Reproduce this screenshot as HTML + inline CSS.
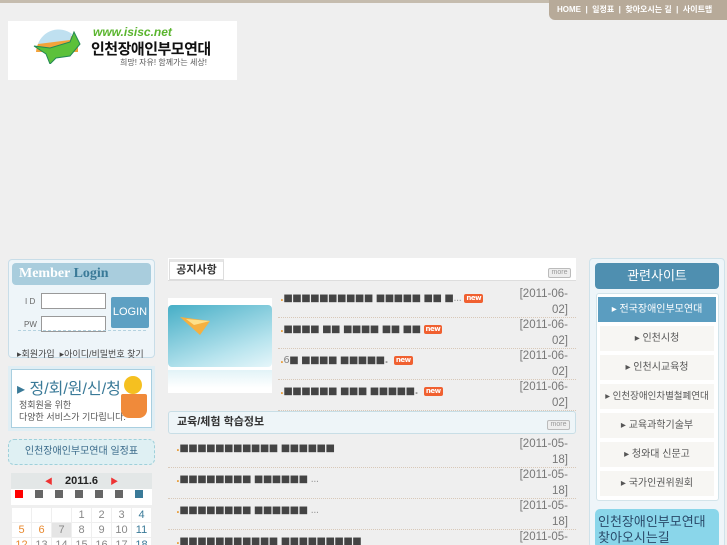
<!DOCTYPE html>
<html><head><meta charset="utf-8"><style>
*{margin:0;padding:0;box-sizing:border-box}
html,body{width:727px;height:545px;overflow:hidden}
body{background:#efefef;font-family:"Liberation Sans","Noto Sans CJK KR",sans-serif;position:relative;font-size:11px;color:#555}
.a{position:absolute}
.sq{font-family:"DejaVu Sans",sans-serif;color:#444;font-weight:bold;letter-spacing:-0.5px;font-size:10px;white-space:nowrap}
.date{color:#777;font-size:11.5px;text-align:right;line-height:15.5px;width:52px}
.dot{border-bottom:1px dotted #d8c8b8}
.new{display:inline-block;background:#f06030;color:#fff;font-size:7px;padding:0 2px;border-radius:2px;line-height:9px;vertical-align:middle}
.more{border:1px solid #bbb;background:#eee;color:#999;font-size:7px;width:23px;height:10px;text-align:center;line-height:8px;border-radius:2px}
.cal td{width:19px;height:14px;text-align:center;font-size:11px;color:#888;background:#fff;padding:0}
.rs{left:600px;width:114px;height:25px;text-align:center;line-height:25px;font-size:10px;color:#555;background:#f7f6f3}
</style></head><body>
<div class="a" style="left:0;top:0;width:727px;height:3px;background:#c5bcae"></div>
<div class="a" style="left:549px;top:0;width:178px;height:20px;background:#b7aa99;border-radius:0 0 0 6px;color:#fff;font-size:8px;line-height:20px;padding-left:8px;white-space:nowrap;font-weight:bold">HOME &nbsp;|&nbsp; 일정표 &nbsp;|&nbsp; 찾아오시는 길 &nbsp;|&nbsp; 사이트맵</div>
<div class="a" style="left:8px;top:21px;width:229px;height:59px;background:#fff"></div>
<svg class="a" style="left:30px;top:24px" width="55" height="40"><path d="M6 28 A22 22 0 0 1 48 20 L48 28Z" fill="#f3a33a"/><path d="M8 20 A22 22 0 0 1 42 10 L40 16 Z" fill="#bfe0f0"/><path d="M4 22 L20 24 L40 18 L44 8 L50 20 L40 32 L26 34 L20 40 L16 30Z" fill="#5cc13a" stroke="#285" stroke-width="1"/></svg>
<div class="a" style="left:93px;top:25px;color:#5ab52e;font-style:italic;font-weight:bold;font-size:12px">www.isisc.net</div>
<div class="a" style="left:91px;top:38px;color:#111;font-weight:bold;font-size:15px;letter-spacing:-0.5px">인천장애인부모연대</div>
<div class="a" style="left:120px;top:57px;color:#555;font-size:8px">희망! 자유! 함께가는 세상!</div>

<div class="a" style="left:8px;top:259px;width:147px;height:99px;background:#eef5f9;border:1px solid #c8dde8;border-radius:4px"></div>
<div class="a" style="left:12px;top:263px;width:139px;height:22px;background:#a9cddd;border-radius:4px;font-family:'Liberation Serif',serif;font-weight:bold;font-size:14px;line-height:22px;padding-left:7px;color:#fff">Member <span style="color:#3a7a98">Login</span></div>
<div class="a" style="left:25px;top:297px;font-size:8px;color:#666">I D</div>
<div class="a" style="left:24px;top:320px;font-size:8px;color:#666">PW</div>
<div class="a" style="left:41px;top:293px;width:65px;height:16px;background:#fff;border:1px solid #999"></div>
<div class="a" style="left:41px;top:316px;width:65px;height:16px;background:#fff;border:1px solid #999"></div>
<div class="a" style="left:111px;top:297px;width:38px;height:31px;background:#5da0c3;border-radius:2px;color:#fff;font-size:11px;text-align:center;line-height:31px">LOGIN</div>
<div class="a" style="left:18px;top:330px;width:128px;border-top:1px dashed #b5d3e0"></div>
<div class="a" style="left:17px;top:347px;font-size:9px;color:#444;white-space:nowrap">▸회원가입 &nbsp;▸아이디/비밀번호 찾기</div>

<div class="a" style="left:8px;top:366px;width:147px;height:65px;background:#fff;border:3px solid #e0eef4;outline:1px solid #a9cfe0;outline-offset:-4px"></div>
<div class="a" style="left:17px;top:375px;color:#3a7a98;font-size:16px;white-space:nowrap">▸ 정/회/원/신/청</div>
<div class="a" style="left:19px;top:399px;color:#555;font-size:9px;line-height:12px">정회원을 위한<br>다양한 서비스가 기다립니다.</div>
<div class="a" style="left:124px;top:376px;width:18px;height:18px;border-radius:50%;background:#f5c020"></div>
<div class="a" style="left:121px;top:394px;width:26px;height:24px;background:#f08a3a;border-radius:2px 2px 8px 8px"></div>

<div class="a" style="left:8px;top:439px;width:147px;height:26px;background:#dff0f3;border:1px dashed #9fd0da;border-radius:6px;color:#3a6a8a;font-size:10px;text-align:center;line-height:24px">인천장애인부모연대 일정표</div>

<div class="a" style="left:11px;top:473px;width:141px;height:16px;background:#e3e7e7;text-align:center;font-weight:bold;font-size:11px;color:#222;line-height:16px"><span style="color:#e33;font-size:8px">◀</span>&nbsp;&nbsp;&nbsp; 2011.6 &nbsp;&nbsp;&nbsp;<span style="color:#e33;font-size:8px">▶</span></div>
<div class="a" style="left:11px;top:489px;width:141px;height:16px;background:#fff"></div>
<div class="a" style="left:15px;top:490px;width:8px;height:8px;background:#f00"></div>
<div class="a" style="left:35px;top:490px;width:8px;height:8px;background:#666;box-shadow:20px 0 #666,40px 0 #666,60px 0 #666,80px 0 #666"></div>
<div class="a" style="left:135px;top:490px;width:8px;height:8px;background:#3a7a98"></div>
<table class="a cal" style="left:11px;top:507px;border-collapse:separate;border-spacing:1px;background:#efefef">
<tr><td></td><td></td><td></td><td>1</td><td>2</td><td>3</td><td style="color:#3a7a98">4</td></tr>
<tr><td style="color:#e88a30">5</td><td style="color:#e88a30">6</td><td style="background:#e5e5e5">7</td><td>8</td><td>9</td><td>10</td><td style="color:#3a7a98">11</td></tr>
<tr><td style="color:#e88a30">12</td><td>13</td><td>14</td><td>15</td><td>16</td><td>17</td><td style="color:#3a7a98">18</td></tr>
</table>

<div class="a" style="left:168px;top:258px;width:408px;height:23px;background:#fff;border-bottom:1px solid #ddd"></div>
<div class="a" style="left:169px;top:259px;width:55px;height:21px;border:1px solid #ddd;border-top:3px solid #e5e5e5;background:#fff;font-size:11px;color:#333;font-weight:bold;text-align:center;line-height:17px">공지사항</div>
<div class="a more" style="left:548px;top:268px">more</div>
<div class="a" style="left:168px;top:298px;width:104px;height:95px;background:#fff"></div>
<div class="a" style="left:168px;top:305px;width:104px;height:62px;background:linear-gradient(160deg,#46aec6,#b8e4ee 70%,#e6f6fa);border-radius:4px"></div>
<svg class="a" style="left:180px;top:315px" width="40" height="25"><path d="M0 2 L30 6 L20 20Z" fill="#f5b040"/><path d="M6 4 L30 6 L14 10Z" fill="#fde08a"/></svg>
<div class="a" style="left:168px;top:370px;width:104px;height:18px;background:linear-gradient(#e2f3f7,#fff)"></div>

<div class="a dot" style="left:278px;top:287px;width:298px;height:31px"><span class="sq" style="position:absolute;left:2px;top:6px"><span style="color:#e8a040">.</span>■■■■■■■■■■ ■■■■■ ■■ ■<span style="color:#999;font-weight:normal">...</span> <span class="new">new</span></span><div class="date" style="position:absolute;right:8px;top:0">[2011-06-02]</div></div>
<div class="a dot" style="left:278px;top:318px;width:298px;height:31px"><span class="sq" style="position:absolute;left:2px;top:6px"><span style="color:#e8a040">.</span>■■■■ ■■ ■■■■ ■■ ■■ <span class="new">new</span></span><div class="date" style="position:absolute;right:8px;top:0">[2011-06-02]</div></div>
<div class="a dot" style="left:278px;top:349px;width:298px;height:31px"><span class="sq" style="position:absolute;left:2px;top:6px"><span style="color:#e8a040">.</span><span style="color:#888;font-weight:normal">6</span>■ ■■■■ ■■■■■<span style="color:#999">.</span> &nbsp;<span class="new">new</span></span><div class="date" style="position:absolute;right:8px;top:0">[2011-06-02]</div></div>
<div class="a dot" style="left:278px;top:380px;width:298px;height:31px"><span class="sq" style="position:absolute;left:2px;top:6px"><span style="color:#e8a040">.</span>■■■■■■ ■■■ ■■■■■<span style="color:#999">.</span> &nbsp;<span class="new">new</span></span><div class="date" style="position:absolute;right:8px;top:0">[2011-06-02]</div></div>

<div class="a" style="left:168px;top:411px;width:408px;height:23px;background:#eef5f8;border:1px solid #c8dee6;border-radius:3px;font-size:11px;font-weight:bold;color:#333;line-height:21px;padding-left:8px">교육/체험 학습정보</div>
<div class="a more" style="left:547px;top:420px">more</div>

<div class="a dot" style="left:168px;top:437px;width:408px;height:31px"><span class="sq" style="position:absolute;left:8px;top:6px"><span style="color:#e8a040">.</span>■■■■■■■■■■■ ■■■■■■</span><div class="date" style="position:absolute;right:8px;top:0">[2011-05-18]</div></div>
<div class="a dot" style="left:168px;top:468px;width:408px;height:31px"><span class="sq" style="position:absolute;left:8px;top:6px"><span style="color:#e8a040">.</span>■■■■■■■■ ■■■■■■ <span style="color:#999;font-weight:normal">...</span></span><div class="date" style="position:absolute;right:8px;top:0">[2011-05-18]</div></div>
<div class="a dot" style="left:168px;top:499px;width:408px;height:31px"><span class="sq" style="position:absolute;left:8px;top:6px"><span style="color:#e8a040">.</span>■■■■■■■■ ■■■■■■ <span style="color:#999;font-weight:normal">...</span></span><div class="date" style="position:absolute;right:8px;top:0">[2011-05-18]</div></div>
<div class="a" style="left:168px;top:530px;width:408px;height:15px"><span class="sq" style="position:absolute;left:8px;top:6px"><span style="color:#e8a040">.</span>■■■■■■■■■■■ ■■■■■■■■■</span><div class="date" style="position:absolute;right:8px;top:0">[2011-05-</div></div>

<div class="a" style="left:589px;top:258px;width:136px;height:290px;background:#eef5f9;border:1px solid #cfe2ea;border-radius:4px"></div>
<div class="a" style="left:595px;top:263px;width:124px;height:26px;background:#4f8fb0;border-radius:4px;color:#fff;font-size:13px;text-align:center;line-height:26px">관련사이트</div>
<div class="a" style="left:596px;top:293px;width:123px;height:208px;background:#fff;border:1px solid #d3e4ea;border-radius:3px"></div>
<div class="a rs" style="left:598px;top:297px;width:118px;background:#5b9dc0;color:#fff">▸ 전국장애인부모연대</div>
<div class="a rs" style="top:326px">▸ 인천시청</div>
<div class="a rs" style="top:355px">▸ 인천시교육청</div>
<div class="a rs" style="top:384px;font-size:9.5px">▸ 인천장애인차별철폐연대</div>
<div class="a rs" style="top:413px">▸ 교육과학기술부</div>
<div class="a rs" style="top:442px">▸ 청와대 신문고</div>
<div class="a rs" style="top:471px">▸ 국가인권위원회</div>
<div class="a" style="left:595px;top:509px;width:124px;height:40px;background:#8ad6ea;border-radius:5px;color:#2a4a6a;font-size:13px;line-height:16px;padding:5px 0 0 3px">인천장애인부모연대<br>찾아오시는길</div>
</body></html>
